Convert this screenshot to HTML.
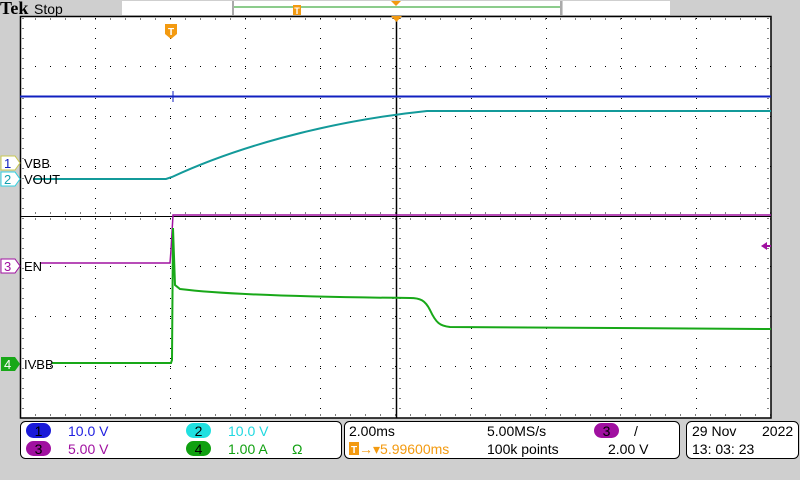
<!DOCTYPE html>
<html><head><meta charset="utf-8"><style>
html,body{margin:0;padding:0;background:#cfcfcf;}
svg{display:block;font-family:"Liberation Sans","DejaVu Sans",sans-serif;}
</style></head><body>
<svg width="800" height="480" viewBox="0 0 800 480" xmlns="http://www.w3.org/2000/svg">
<rect width="800" height="480" fill="#cfcfcf"/>
<!-- top bar -->
<text x="0" y="14" font-family="Liberation Serif,serif" font-weight="bold" font-size="18" fill="#000">Tek</text>
<text x="34" y="14" font-size="14" fill="#000">Stop</text>
<rect x="122" y="1" width="110" height="14" fill="#fff"/>
<rect x="232" y="1" width="330" height="14" fill="#fff"/>
<rect x="232" y="1" width="2" height="14" fill="#aaa"/>
<rect x="560" y="1" width="2" height="14" fill="#aaa"/>
<line x1="234" y1="7" x2="560" y2="7" stroke="#1a9a1a" stroke-width="1"/>
<rect x="293" y="5" width="8" height="10" fill="#f39a10"/>
<text x="297" y="14" font-size="9" font-weight="bold" fill="#fff" text-anchor="middle">T</text>
<rect x="563" y="1" width="107" height="14" fill="#fff"/>
<polygon points="391,1 401,1 396,6" fill="#f39a10"/>
<!-- plot -->
<rect x="20" y="16" width="751" height="402" fill="#fff"/>
<g stroke="#000" stroke-width="1" stroke-dasharray="1 9">
<line x1="95.5" y1="18" x2="95.5" y2="418"/><line x1="170.5" y1="18" x2="170.5" y2="418"/>
<line x1="245.5" y1="18" x2="245.5" y2="418"/><line x1="320.5" y1="18" x2="320.5" y2="418"/>
<line x1="471.5" y1="18" x2="471.5" y2="418"/><line x1="546.5" y1="18" x2="546.5" y2="418"/>
<line x1="621.5" y1="18" x2="621.5" y2="418"/><line x1="696.5" y1="18" x2="696.5" y2="418"/>
</g>
<g stroke="#000" stroke-width="1" stroke-dasharray="1 14">
<line x1="35" y1="66.5" x2="771" y2="66.5"/><line x1="35" y1="116.5" x2="771" y2="116.5"/>
<line x1="35" y1="166.5" x2="771" y2="166.5"/><line x1="35" y1="266.5" x2="771" y2="266.5"/>
<line x1="35" y1="316.5" x2="771" y2="316.5"/><line x1="35" y1="366.5" x2="771" y2="366.5"/>
</g>
<g stroke="#000" stroke-width="1" stroke-dasharray="1 14">
<line x1="35" y1="213" x2="771" y2="213"/><line x1="35" y1="219" x2="771" y2="219"/>
<line x1="35" y1="19" x2="771" y2="19"/><line x1="35" y1="415" x2="771" y2="415"/>
</g>
<g stroke="#000" stroke-width="1" stroke-dasharray="1 9">
<line x1="393" y1="18" x2="393" y2="418"/><line x1="400" y1="18" x2="400" y2="418"/>
<line x1="23" y1="18" x2="23" y2="418"/><line x1="768" y1="18" x2="768" y2="418"/>
</g>
<line x1="20" y1="216.5" x2="771" y2="216.5" stroke="#000"/>
<line x1="396.5" y1="16" x2="396.5" y2="418" stroke="#000" stroke-width="1.5"/>
<rect x="20.5" y="16.5" width="750.5" height="401.5" fill="none" stroke="#000" stroke-width="1.5"/>
<polygon points="391,16 402,16 396.5,22" fill="#f39a10"/>
<path d="M165,24 h12 v10 l-6,5 l-6,-5z" fill="#f39a10"/>
<text x="171" y="35" font-size="10" font-weight="bold" fill="#fff" text-anchor="middle">T</text>
<!-- traces -->
<line x1="20" y1="96.5" x2="771" y2="96.5" stroke="#1020c0" stroke-width="2"/>
<path d="M173,91 v11" stroke="#1020c0"/>
<path d="M33,179 L166,179 L172,177 C230,150 320,122 427,111 L771,111" fill="none" stroke="#139a9a" stroke-width="2"/>
<path d="M40,263 L170,263 L171,250 L173,215 L771,215" fill="none" stroke="#a010a0" stroke-width="1.5"/>
<path d="M52,363 L171,363 L172,360 L173,228 L175,285 L180,289 C220,294 300,297 410,298 C420,298 425,300 430,310 C436,323 440,326 450,327 L771,329" fill="none" stroke="#18a818" stroke-width="2"/>
<polygon points="761,246 767,242 767,250" fill="#a010a0"/><line x1="765" y1="246" x2="771" y2="246" stroke="#a010a0" stroke-width="2"/>
<!-- channel labels -->
<path d="M1,156 h14 l5,7 l-5,7 h-14z" fill="#fff" stroke="#c8c850"/><text x="4" y="168" font-size="13" fill="#1020c0">1</text>
<path d="M1,172 h14 l5,7 l-5,7 h-14z" fill="#fff" stroke="#30d0e0"/><text x="4" y="184" font-size="13" fill="#13a0b0">2</text>
<text x="24" y="168" font-size="13" fill="#000">VBB</text>
<text x="24" y="184" font-size="13" fill="#000">VOUT</text>
<path d="M1,259 h14 l5,7 l-5,7 h-14z" fill="#fff" stroke="#a010a0"/><text x="4" y="271" font-size="13" fill="#a010a0">3</text>
<text x="24" y="271" font-size="13" fill="#000">EN</text>
<path d="M1,357 h14 l5,7 l-5,7 h-14z" fill="#18a818"/><text x="4" y="369" font-size="13" fill="#fff">4</text>
<text x="24" y="369" font-size="13" fill="#000">IVBB</text>
<!-- bottom boxes -->
<rect x="20.5" y="421.5" width="321" height="37" rx="5" fill="#fff" stroke="#000"/>
<rect x="344.5" y="421.5" width="335" height="37" rx="5" fill="#fff" stroke="#000"/>
<rect x="686.5" y="421.5" width="112" height="37" rx="5" fill="#fff" stroke="#000"/>
<g font-size="14">
<rect x="26" y="423" width="25" height="15" rx="7.5" fill="#1a1ad8"/><text x="38.5" y="436" text-anchor="middle" fill="#000">1</text>
<rect x="26" y="441" width="25" height="15" rx="7.5" fill="#a010a0"/><text x="38.5" y="454" text-anchor="middle" fill="#000">3</text>
<rect x="186" y="423" width="25" height="15" rx="7.5" fill="#20e0e0"/><text x="198.5" y="436" text-anchor="middle" fill="#000">2</text>
<rect x="186" y="441" width="25" height="15" rx="7.5" fill="#10a010"/><text x="198.5" y="454" text-anchor="middle" fill="#000">4</text>
<text x="68" y="436" fill="#2020e0">10.0 V</text>
<text x="68" y="454" fill="#a010a0">5.00 V</text>
<text x="228" y="436" fill="#20d8e0">10.0 V</text>
<text x="228" y="454" fill="#10a010">1.00 A</text>
<text x="292" y="454" fill="#10a010">Ω</text>
<text x="349" y="436" fill="#000">2.00ms</text>
<rect x="349" y="442" width="10" height="13" fill="#f39a10"/><text x="354" y="453" font-size="10" text-anchor="middle" fill="#fff" font-weight="bold">T</text>
<text x="359" y="454" fill="#f39a10">→▾5.99600ms</text>
<text x="487" y="436" fill="#000">5.00MS/s</text>
<text x="487" y="454" fill="#000">100k points</text>
<rect x="594" y="423" width="25" height="15" rx="7.5" fill="#a010a0"/><text x="606.5" y="436" text-anchor="middle" fill="#000">3</text>
<text x="634" y="436" fill="#000">/</text>
<text x="608" y="454" fill="#000">2.00 V</text>
<text x="692" y="436" fill="#000">29 Nov</text>
<text x="762" y="436" fill="#000">2022</text>
<text x="692" y="454" fill="#000">13: 03: 23</text>
</g>
</svg>
</body></html>
